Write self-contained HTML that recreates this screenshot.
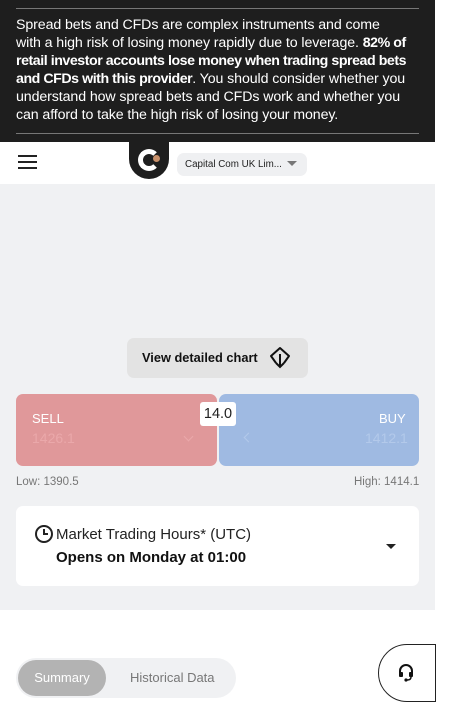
<!DOCTYPE html>
<html><head><meta charset="utf-8"><style>
*{margin:0;padding:0;box-sizing:border-box}
body{width:450px;height:717px;overflow:hidden;background:#fff;font-family:"Liberation Sans",sans-serif;position:relative}
.ab{position:absolute}
b{letter-spacing:-0.45px}
</style></head><body>
<div class="ab" style="left:0;top:0;width:435px;height:142px;background:#1e1e1e"></div>
<div class="ab" style="left:16px;top:8px;width:403px;height:1px;background:#777"></div>
<div class="ab" style="left:16px;top:133px;width:403px;height:1px;background:#777"></div>
<div class="ab" style="left:16px;top:16px;width:430px;white-space:nowrap;color:#fff;font-size:14.2px;line-height:18px;letter-spacing:-0.1px">Spread bets and CFDs are complex instruments and come<br>with a high risk of losing money rapidly due to leverage. <b>82% of<br>retail investor accounts lose money when trading spread bets<br>and CFDs with this provider</b>. You should consider whether you<br>understand how spread bets and CFDs work and whether you<br>can afford to take the high risk of losing your money.</div>

<div class="ab" style="left:18px;top:155px;width:19px;height:2px;background:#222;box-shadow:0 6px 0 #222,0 12px 0 #222"></div>
<div class="ab" style="left:129px;top:142px;width:40px;height:37px;background:#1e1e1e;border-radius:0 0 20px 20px"></div>
<div class="ab" style="left:138px;top:149px;width:22px;height:22px;border:5px solid #fff;border-right-color:transparent;border-radius:50%"></div>
<div class="ab" style="left:153px;top:155px;width:7px;height:7px;background:#c8906a;border-radius:50%"></div>
<div class="ab" style="left:177px;top:153px;width:130px;height:23px;background:#eff0f2;border-radius:7px;font-size:9.8px;color:#222;line-height:23px;padding-left:8px">Capital Com UK Lim...</div>
<div class="ab" style="left:287px;top:161px;border:5px solid transparent;border-top:5px solid #777;border-bottom:0"></div>

<div class="ab" style="left:0;top:184px;width:435px;height:426px;background:#f0f1f3"></div>
<div class="ab" style="left:127px;top:338px;width:181px;height:40px;background:#e3e3e3;border-radius:7px;font-size:12.8px;font-weight:bold;line-height:40px;padding-left:15px;color:#111">View detailed chart</div>
<svg class="ab" style="left:269px;top:346px" width="22" height="24" viewBox="0 0 22 24"><path d="M7 17 L2 10 L11 2 L20 10 L15 17" fill="none" stroke="#111" stroke-width="2" stroke-linejoin="round"/><path d="M11 8 V21 M7 17 L11 21 L15 17" fill="none" stroke="#111" stroke-width="2"/></svg>

<div class="ab" style="left:16px;top:394px;width:201px;height:72px;background:#e0989a;border-radius:7px"></div>
<div class="ab" style="left:219px;top:394px;width:200px;height:72px;background:#9fbae2;border-radius:7px"></div>
<div class="ab" style="left:32px;top:411px;font-size:13px;color:#fff">SELL</div>
<div class="ab" style="left:32px;top:430px;font-size:14px;color:#eaa8aa">1426.1</div>
<div class="ab" style="left:379px;top:411px;font-size:13px;color:#fff">BUY</div>
<div class="ab" style="left:365px;top:430px;font-size:14px;color:#b3c9ea">1412.1</div>
<div class="ab" style="left:185px;top:433px;width:7px;height:7px;border-right:1.5px solid #eaa8aa;border-bottom:1.5px solid #eaa8aa;transform:rotate(45deg)"></div>
<div class="ab" style="left:245px;top:434px;width:7px;height:7px;border-left:1.5px solid #b3c9ea;border-bottom:1.5px solid #b3c9ea;transform:rotate(45deg)"></div>
<div class="ab" style="left:200px;top:402px;width:36px;height:24px;background:#fff;border-radius:3px;font-size:14.5px;line-height:24px;text-align:center;color:#222">14.0</div>
<div class="ab" style="left:16px;top:476px;font-size:11.5px;color:#777">Low: 1390.5</div>
<div class="ab" style="left:354px;top:476px;font-size:11.5px;color:#777">High: 1414.1</div>

<div class="ab" style="left:16px;top:506px;width:403px;height:80px;background:#fff;border-radius:7px"></div>
<div class="ab" style="left:35px;top:525px;width:18px;height:18px;border:2px solid #222;border-radius:50%"></div>
<div class="ab" style="left:43px;top:529px;width:5px;height:6px;border-left:2px solid #222;border-bottom:2px solid #222"></div>
<div class="ab" style="left:56px;top:526px;font-size:15px;color:#222">Market Trading Hours* (UTC)</div>
<div class="ab" style="left:56px;top:549px;font-size:15px;font-weight:bold;color:#111">Opens on Monday at 01:00</div>
<div class="ab" style="left:386px;top:544px;border:5px solid transparent;border-top:5px solid #222;border-bottom:0"></div>

<div class="ab" style="left:16px;top:658px;width:220px;height:40px;background:#f0f1f3;border-radius:20px"></div>
<div class="ab" style="left:18px;top:660px;width:88px;height:36px;background:#b3b3b3;border-radius:18px;font-size:13px;color:#fff;line-height:36px;text-align:center">Summary</div>
<div class="ab" style="left:130px;top:660px;font-size:13px;color:#777;line-height:36px">Historical Data</div>
<div class="ab" style="left:378px;top:644px;width:58px;height:58px;border:1px solid #222;border-radius:29px 0 0 29px;background:#fff"></div>
<svg class="ab" style="left:397px;top:663px" width="18" height="20" viewBox="0 0 18 20"><path d="M3 12 V8 A6 6 0 0 1 15 8 V12" fill="none" stroke="#111" stroke-width="2"/><rect x="2" y="9" width="4" height="5" rx="1" fill="#111"/><rect x="12" y="9" width="4" height="5" rx="1" fill="#111"/><path d="M14 14 Q14 17 10 17" fill="none" stroke="#111" stroke-width="1.5"/><circle cx="9" cy="17" r="1.6" fill="#111"/></svg>
</body></html>
